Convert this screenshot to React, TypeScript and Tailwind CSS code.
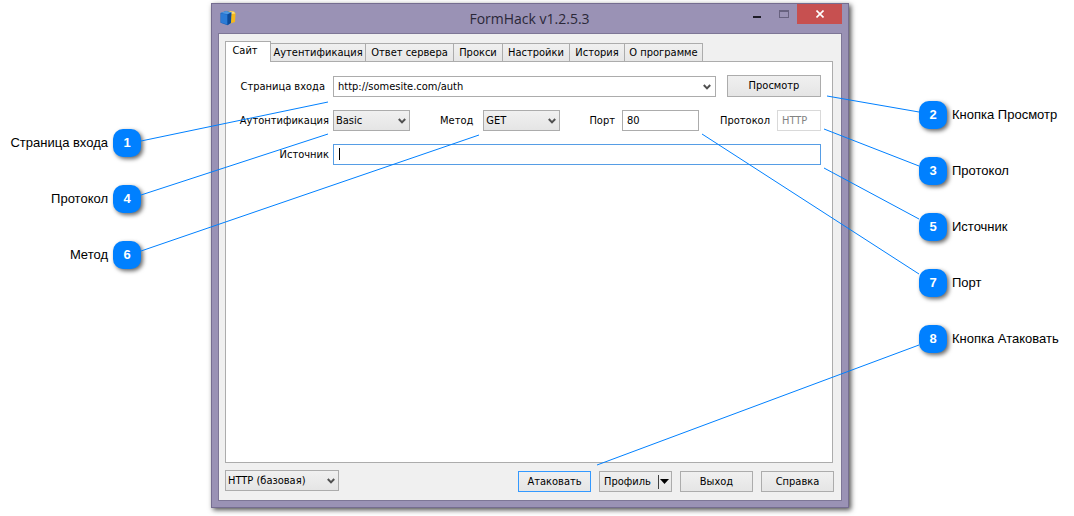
import type { ReactNode } from 'react';
import clsx from 'clsx';

const tabs = [
  { name: 'Сайт', width: 'w-[46px]' },
  { name: 'Аутентификация', width: 'w-[96px]' },
  { name: 'Ответ сервера', width: 'w-[89px]' },
  { name: 'Прокси', width: 'w-[50px]' },
  { name: 'Настройки', width: 'w-[68px]' },
  { name: 'История', width: 'w-[56px]' },
  { name: 'О программе', width: 'w-[79px]' },
];

const leftCallouts = [
  { n: 1, text: 'Страница входа' },
  { n: 4, text: 'Протокол' },
  { n: 6, text: 'Метод' },
];

const rightCallouts = [
  { n: 2, text: 'Кнопка Просмотр' },
  { n: 3, text: 'Протокол' },
  { n: 5, text: 'Источник' },
  { n: 7, text: 'Порт' },
  { n: 8, text: 'Кнопка Атаковать' },
];

// leader lines, measured from the badge column on the left
const leftLines = [
  [0, 138, 187, 99],
  [0, 192, 187, 131],
  [0, 248, 338, 132],
];

// leader lines, ending at the badge column on the right
const rightLines = [
  [230, 93, 322, 109],
  [227, 126, 322, 163],
  [227, 165, 322, 216],
  [105, 131, 322, 271],
  [0, 462, 322, 342],
];

function Lines({ lines, className }: { lines: number[][]; className: string }) {
  return (
    <svg className={clsx('pointer-events-none absolute top-0 h-[480px] overflow-visible', className)}>
      {lines.map(([x1, y1, x2, y2]) => (
        <line key={y1} x1={x1} y1={y1} x2={x2} y2={y2} stroke="#0080ff" strokeWidth="1" />
      ))}
    </svg>
  );
}

function Badge({ n }: { n: number }) {
  return (
    <span className="flex size-7 shrink-0 items-center justify-center rounded-[10px] bg-[#0080ff] text-[13px] font-bold text-white shadow-[2px_2px_4px_rgba(0,0,0,0.6)]">
      {n}
    </span>
  );
}

function Chevron() {
  return (
    <svg viewBox="0 0 8 6" className="h-[6px] w-[8px]">
      <path d="M0.8 1 L4 4.4 L7.2 1" fill="none" stroke="#505050" strokeWidth="2" />
    </svg>
  );
}

function Select({ id, value, label, className }: { id: string; value: string; label?: string; className: string }) {
  return (
    <div className={clsx('relative h-[21px] shrink-0', className)}>
      <select
        id={id}
        aria-label={label}
        className="block size-full appearance-none border border-[#acacac] bg-linear-to-b from-[#f0f0f0] to-[#e5e5e5] pl-[2px]"
      >
        <option>{value}</option>
      </select>
      <span className="pointer-events-none absolute top-[8px] right-[4px]">
        <Chevron />
      </span>
    </div>
  );
}

function Button({ children, className }: { children: ReactNode; className: string }) {
  return (
    <button
      type="button"
      className={clsx(
        'flex shrink-0 items-center justify-center border bg-linear-to-b from-[#f0f0f0] to-[#e5e5e5]',
        className,
      )}
    >
      {children}
    </button>
  );
}

function AppIcon() {
  return (
    <svg viewBox="0 0 16 16" className="size-4">
      <path d="M7 1 L14 1.5 L15.5 3.5 L15 12 L9 14 L7 10 Z" fill="#f5b81c" />
      <path d="M9 1.2 L14 1.8 L15.3 3.6 L11 4 Z" fill="#ffe07a" />
      <path d="M0.5 3 L6 1 L11.5 2.2 L11 13 L7.5 15.2 L0.5 12.8 Z" fill="#1660b8" />
      <path d="M0.5 3 L6 1 L11.5 2.2 L7.5 4.2 Z" fill="#4f97e0" />
      <path d="M0.8 3.4 L7.2 4.6 L7.2 14.6 L0.8 12.5 Z" fill="#2b7bd6" />
      <path d="M7.6 4.6 L11.2 2.7 L10.8 12.8 L7.6 15 Z" fill="#0e4a97" />
    </svg>
  );
}

function TitleBar() {
  return (
    <header className="flex h-[29px] items-start">
      <span className="pt-[6px] pl-[2px]">
        <AppIcon />
      </span>
      <h1 className="flex-1 pl-[80px] text-center font-['Open_Sans',sans-serif] text-[14px] leading-[29px] text-[#2b2838]">
        FormHack v1.2.5.3
      </h1>
      <button type="button" aria-label="Свернуть" className="flex h-5 w-[27px] items-center justify-center">
        <span className="mt-[5px] h-[2px] w-[8px] bg-[#1e1c27]" />
      </button>
      <button type="button" aria-label="Развернуть" className="flex h-5 w-[27px] items-center justify-center">
        <span className="h-[8px] w-[10px] border border-t-2 border-[#686280]" />
      </button>
      <button type="button" aria-label="Закрыть" className="flex h-5 w-[45px] items-center justify-center bg-[#c75050]">
        <svg viewBox="0 0 8 8" className="size-2">
          <path d="M0.5 0.5 L7.5 7.5 M7.5 0.5 L0.5 7.5" stroke="#fff" strokeWidth="1.6" />
        </svg>
      </button>
    </header>
  );
}

function Tabs() {
  return (
    <div role="tablist" className="flex items-end">
      {tabs.map(({ name, width }, i) => (
        <button
          key={name}
          type="button"
          role="tab"
          aria-selected={i === 0}
          className={clsx(
            'flex items-center justify-center border border-b-0 border-[#acacac] whitespace-nowrap',
            width,
            i === 0
              ? 'relative -mb-px h-[21px] bg-white pr-[6px] pb-[2px]'
              : '-ml-px h-[18px] bg-linear-to-b from-[#f0f0f0] to-[#e6e6e6]',
          )}
        >
          {name}
        </button>
      ))}
    </div>
  );
}

function SitePane() {
  const label = 'w-[107px] shrink-0 text-right whitespace-nowrap';
  return (
    <div role="tabpanel" className="mr-px flex min-h-[200px] flex-1 flex-col gap-[13px] border border-[#acacac] bg-white pt-[13px] pr-[11px]">
      <div className="flex items-end">
        <label htmlFor="page" className={clsx(label, 'pr-2 leading-[21px]')}>
          Страница входа
        </label>
        <div className="flex h-[21px] min-w-0 flex-1 border border-[#acacac]">
          <input id="page" defaultValue="http://somesite.com/auth" className="min-w-0 flex-1 pl-1 outline-none" />
          <button type="button" aria-label="Открыть список" className="flex w-4 items-center justify-center">
            <Chevron />
          </button>
        </div>
        <Button className="ml-[11px] h-[22px] w-[94px] border-[#acacac]">Просмотр</Button>
      </div>
      <div className="flex items-center">
        <label htmlFor="auth" className={clsx(label, 'pr-1')}>
          Аутонтификация
        </label>
        <Select id="auth" value="Basic" className="w-[77px]" />
        <div className="flex flex-1 items-center justify-between pl-[30px]">
          <div className="flex items-center gap-[10px]">
            <label htmlFor="method">Метод</label>
            <Select id="method" value="GET" className="w-[77px]" />
          </div>
          <div className="flex items-center gap-[7px] pl-2">
            <label htmlFor="port">Порт</label>
            <input id="port" defaultValue="80" className="h-[21px] w-[77px] border border-[#acacac] pl-1 outline-none" />
          </div>
          <div className="flex items-center gap-[7px]">
            <label htmlFor="protocol">Протокол</label>
            <input
              id="protocol"
              defaultValue="HTTP"
              disabled
              className="h-[21px] w-[44px] border border-[#d9d9d9] pl-1 text-[#838383]"
            />
          </div>
        </div>
      </div>
      <div className="flex items-center">
        <label htmlFor="source" className={clsx(label, 'pr-1')}>
          Источник
        </label>
        <div className="relative flex h-[21px] flex-1">
          <input id="source" className="min-w-0 flex-1 border border-[#569de5] pl-1 outline-none" />
          <span className="absolute top-[4px] left-[6px] h-[12px] w-px bg-black" />
        </div>
      </div>
    </div>
  );
}

function Footer() {
  return (
    <footer className="mt-[7px] flex h-[22px] items-start justify-between">
      <Select id="profile" label="Тип атаки" value="HTTP (базовая)" className="w-[114px]" />
      <div className="flex gap-2 self-end">
        <Button className="h-[21px] w-[73px] border-[#3399ff]">Атаковать</Button>
        <Button className="h-[21px] w-[73px] border-[#acacac] pl-[2px]">
          Профиль
          <span className="ml-[7px] h-[14px] w-px bg-[#404040]" />
          <svg viewBox="0 0 9 5" className="ml-px h-[5px] w-[9px]">
            <path d="M0 0 H9 L4.5 5 Z" fill="#000" />
          </svg>
        </Button>
        <Button className="h-[21px] w-[73px] border-[#acacac]">Выход</Button>
        <Button className="h-[21px] w-[73px] border-[#acacac]">Справка</Button>
      </div>
    </footer>
  );
}

export default function App() {
  return (
    <main className="flex min-h-screen bg-white pt-[3px] pb-2 font-['Liberation_Sans',Arial,sans-serif] text-[13px] leading-4 text-black">
      <ul className="flex w-[211px] shrink-0 flex-col gap-7 pt-[126px] pr-[70px]">
        {leftCallouts.map(({ n, text }) => (
          <li key={n} className="flex items-center justify-end gap-[5px]">
            {text}
            <Badge n={n} />
          </li>
        ))}
      </ul>

      <div className="relative flex min-w-0 flex-1 flex-col">
        <section className="flex flex-1 flex-col border border-[#756d90] bg-[#9a92b5] px-[6px] pb-[6px] shadow-[2px_2px_5px_rgba(0,0,0,0.7)]">
          <TitleBar />
          <div className="flex flex-1 flex-col border border-[#7d7696] bg-[#f0f0f0] pt-[7px] pr-[7px] pb-2 pl-[6px] font-['DejaVu_Sans_Condensed','DejaVu_Sans',sans-serif] text-[11px]">
            <Tabs />
            <SitePane />
            <Footer />
          </div>
        </section>
        <Lines lines={leftLines} className="-left-[70px] w-[340px]" />
        <Lines lines={rightLines} className="-right-[70px] w-[322px]" />
      </div>

      <ul className="flex w-[225px] shrink-0 flex-col gap-7 pt-[98px] pl-[70px]">
        {rightCallouts.map(({ n, text }) => (
          <li key={n} className="flex items-center gap-[5px]">
            <Badge n={n} />
            {text}
          </li>
        ))}
      </ul>
    </main>
  );
}
